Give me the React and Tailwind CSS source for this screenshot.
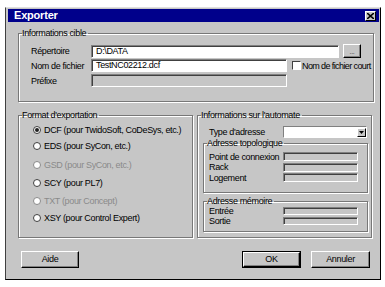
import React from 'react';

const font = { fontFamily: '"Liberation Sans", Arial, sans-serif' };

function Sunken({ className = '', value = '', disabled = false }) {
  return (
    <div
      className={`shrink-0 border border-t-[#808080] border-l-[#808080] border-b-white border-r-white shadow-[inset_1px_1px_0_#404040] text-[9px] leading-[11px] pl-[4px] text-black whitespace-nowrap overflow-hidden ${disabled ? 'bg-[#c6c6c6]' : 'bg-white'} ${className}`}
    >
      {value}
    </div>
  );
}

function Button({ children, className = '', primary = false }) {
  return (
    <div className={`shrink-0 ${primary ? 'border border-black' : ''} ${className}`}>
      <div className="h-full border border-t-white border-l-white border-b-black border-r-black shadow-[inset_-1px_-1px_0_#808080] bg-[#c6c6c6] flex items-center justify-center text-[9px] text-black">
        {children}
      </div>
    </div>
  );
}

function Group({ title, className = '', children }) {
  return (
    <fieldset className={`min-w-0 shrink-0 border border-[#777] shadow-[inset_1px_1px_0_#fff,1px_1px_0_#fff] ${className}`}>
      <legend className="text-[9px] leading-[10px] text-black ml-[3px] pr-[2px] whitespace-nowrap">{title}</legend>
      {children}
    </fieldset>
  );
}

function Radio({ label, checked = false, disabled = false }) {
  return (
    <div className={`flex items-center gap-[3px] h-[12px] text-[9px] leading-[12px] whitespace-nowrap ${disabled ? 'text-[#8a8a8a]' : 'text-black'}`}>
      <span className={`shrink-0 w-[8px] h-[8px] rounded-full border ${disabled ? 'border-[#8a8a8a]' : 'border-[#404040]'} bg-white flex items-center justify-center`}>
        {checked && <span className="w-[4px] h-[4px] rounded-full bg-[#202020]" />}
      </span>
      <span>{label}</span>
    </div>
  );
}

export default function App() {
  return (
    <div className="w-[385px] h-[287px] bg-white pl-[5px] pt-[7px] tracking-[-0.35px]" style={font}>
      <div className="w-[376px] h-[273px] bg-[#c6c6c6] border border-t-[#dfdfdf] border-l-[#404040] border-b-black border-r-black p-[1px] flex flex-col">
        {/* Barre de titre */}
        <div className="h-[13px] ml-[1px] bg-[#00008b] flex items-center justify-between pl-[6px] pr-[3px]">
          <span className="text-white font-bold text-[11px] leading-[13px] tracking-[-0.2px]">Exporter</span>
          <span className="w-[11px] h-[10px] bg-[#c6c6c6] border border-t-white border-l-white border-b-black border-r-black flex items-center justify-center">
            <svg width="7" height="6" viewBox="0 0 7 6">
              <path d="M0 0 L7 6 M7 0 L0 6" stroke="#000" strokeWidth="1.6" />
            </svg>
          </span>
        </div>

        <div className="ml-[11px] w-[356px] flex flex-col">
          {/* Informations cible */}
          <Group title="Informations cible" className="mt-[6px] w-[356px] h-[74px]">
            <div className="flex flex-col pl-[12px] pt-[6px] text-[9px] leading-[12px] text-black">
              <div className="flex items-center h-[14px]">
                <span className="w-[60px] shrink-0 whitespace-nowrap">Répertoire</span>
                <Sunken className="w-[248px] h-[13px]" value="D:\DATA" />
                <Button className="ml-[4px] w-[18px] h-[14px]">
                  <span className="text-[7px] leading-[7px] text-[#404040]">...</span>
                </Button>
              </div>
              <div className="flex items-center h-[13px] mt-[1px]">
                <span className="w-[60px] shrink-0 whitespace-nowrap">Nom de fichier</span>
                <Sunken className="w-[196px] h-[13px]" value="TestNC02212.dcf" />
                <span className="shrink-0 ml-[5px] w-[9px] h-[9px] bg-white border border-t-[#404040] border-l-[#404040] border-b-white border-r-white" />
                <span className="ml-[1px] whitespace-nowrap tracking-[-0.6px]">Nom de fichier court</span>
              </div>
              <div className="flex items-center h-[13px] mt-[2px]">
                <span className="w-[60px] shrink-0 whitespace-nowrap">Préfixe</span>
                <Sunken className="w-[196px] h-[13px]" disabled />
              </div>
            </div>
          </Group>

          <div className="flex gap-[4px] mt-[8px]">
            {/* Format d'exportation */}
            <Group title="Format d'exportation" className="w-[175px] h-[128px]">
              <div className="flex flex-col pl-[14px] pt-[4px]">
                <Radio label="DCF (pour TwidoSoft, CoDeSys, etc.)" checked />
                <div className="mt-[4px]"><Radio label="EDS (pour SyCon, etc.)" /></div>
                <div className="mt-[7px]"><Radio label="GSD (pour SyCon, etc.)" disabled /></div>
                <div className="mt-[6px]"><Radio label="SCY (pour PL7)" /></div>
                <div className="mt-[6px]"><Radio label="TXT (pour Concept)" disabled /></div>
                <div className="mt-[5px]"><Radio label="XSY (pour Control Expert)" /></div>
              </div>
            </Group>

            {/* Informations sur l'automate */}
            <Group title="Informations sur l'automate" className="w-[175px] h-[128px]">
              <div className="flex flex-col pl-[5px] text-[9px] leading-[10px] text-black">
                <div className="flex items-center h-[12px] pl-[6px] mt-[6px]">
                  <span className="w-[74px] shrink-0 whitespace-nowrap">Type d'adresse</span>
                  <div className="shrink-0 w-[84px] h-[12px] bg-white border border-t-[#808080] border-l-[#808080] border-b-white border-r-white flex justify-end">
                    <span className="w-[9px] h-[9px] mt-[0.5px] mr-[0.5px] bg-[#c6c6c6] border border-t-white border-l-white border-b-black border-r-black flex items-center justify-center">
                      <svg width="5" height="3" viewBox="0 0 5 3"><path d="M0 0 H5 L2.5 3 Z" fill="#000" /></svg>
                    </span>
                  </div>
                </div>

                <Group title="Adresse topologique" className="w-[165px] h-[55px]">
                  <div className="flex flex-col pl-[5px] pt-[4px] gap-[1.5px]">
                    <div className="flex items-center h-[9px]">
                      <span className="w-[74px] shrink-0 whitespace-nowrap">Point de connexion</span>
                      <Sunken className="w-[75px] h-[9px]" disabled />
                    </div>
                    <div className="flex items-center h-[9px]">
                      <span className="w-[74px] shrink-0 whitespace-nowrap">Rack</span>
                      <Sunken className="w-[75px] h-[9px]" disabled />
                    </div>
                    <div className="flex items-center h-[9px]">
                      <span className="w-[74px] shrink-0 whitespace-nowrap">Logement</span>
                      <Sunken className="w-[75px] h-[9px]" disabled />
                    </div>
                  </div>
                </Group>

                <Group title="Adresse mémoire" className="w-[165px] h-[36px] mt-[3px]">
                  <div className="flex flex-col pl-[5px] pt-[1px] gap-[2px]">
                    <div className="flex items-center h-[8px]">
                      <span className="w-[74px] shrink-0 whitespace-nowrap">Entrée</span>
                      <Sunken className="w-[75px] h-[8px]" disabled />
                    </div>
                    <div className="flex items-center h-[8px]">
                      <span className="w-[74px] shrink-0 whitespace-nowrap">Sortie</span>
                      <Sunken className="w-[75px] h-[8px]" disabled />
                    </div>
                  </div>
                </Group>
              </div>
            </Group>
          </div>
        </div>

        {/* Boutons */}
        <div className="flex items-center mt-[13px] pl-[14px] pr-[9px]">
          <Button className="w-[58px] h-[17px]">Aide</Button>
          <div className="flex-1" />
          <Button primary className="w-[59px] h-[17px]">OK</Button>
          <Button className="ml-[10px] w-[59px] h-[17px]">Annuler</Button>
        </div>
      </div>
    </div>
  );
}
